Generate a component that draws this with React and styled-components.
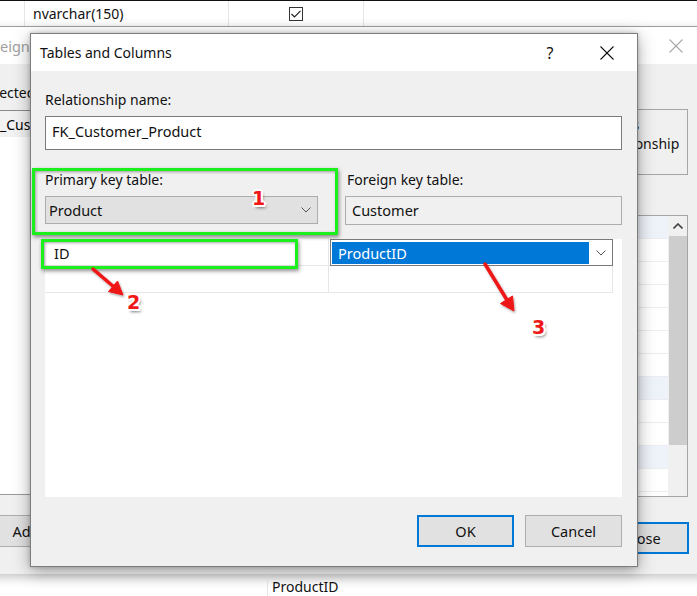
import React from 'react';
import styled, { createGlobalStyle } from 'styled-components';

const Global = createGlobalStyle`
  html, body { margin: 0; padding: 0; background: #fff; }
  body { font-family: "Noto Sans", "Open Sans", sans-serif; font-size: 14px; color: #000; }
  * { box-sizing: border-box; }
`;

const Screen = styled.div`
  position: relative;
  width: 697px;
  height: 596px;
  overflow: hidden;
  background: #fff;
`;

/* ---------- background table (top) ---------- */
const BackTable = styled.div`
  position: absolute;
  left: 0;
  top: 0;
  width: 100%;
  height: 27px;
  border-top: 1px solid #111;
  border-bottom: 1px solid #a8a8a8;
  display: grid;
  grid-template-columns: 24px 204px 135px 1fr;
  background: #fff;
`;

const TableCell = styled.div`
  display: flex;
  align-items: center;
  justify-content: ${p => (p.$center ? 'center' : 'flex-start')};
  padding-left: ${p => (p.$center ? 0 : p.$pad ?? 8)}px;
  border-left: ${p => (p.$first ? 'none' : '1px solid #e6e6e6')};
  font-size: 14px;
  color: #111;
  white-space: nowrap;
`;

const CheckBox = styled.div`
  width: 14px;
  height: 14px;
  border: 1px solid #333;
  display: flex;
  align-items: center;
  justify-content: center;
  background: #fff;
`;

const BottomRow = styled.div`
  position: absolute;
  left: 0;
  top: 575px;
  width: 100%;
  height: 22px;
  display: grid;
  grid-template-columns: 267px 1fr;
`;

/* ---------- background dialog ---------- */
const BackDialog = styled.div`
  position: absolute;
  left: -32px;
  top: 27px;
  width: 740px;
  height: 547px;
  background: #f0f0f0;
  box-shadow: 0 3px 10px rgba(0, 0, 0, 0.25);
  display: flex;
  flex-direction: column;
`;

const BackTitleBar = styled.div`
  height: 37px;
  flex: none;
  background: #fff;
  display: flex;
  align-items: center;
  padding: 0 25px 0 10px;
  color: #a0a0a0;
  font-size: 14.5px;
`;

const CaptionIcon = styled.div`
  margin-left: auto;
  width: 14px;
  height: 14px;
  display: flex;
`;

const BackBody = styled.div`
  flex: 1;
  display: grid;
  grid-template-columns: 270px 1fr;
  column-gap: 30px;
  padding: 19px 50px 0 12px;
`;

const BackColumn = styled.div`
  display: flex;
  flex-direction: column;
`;

const BackLabel = styled.div`
  height: 19px;
  line-height: 19px;
  font-size: 14px;
  color: #111;
  white-space: nowrap;
  margin-left: ${p => p.$indent || 0}px;
`;

const List = styled.div`
  margin-top: 8px;
  height: 385px;
  background: #fff;
  border: 1px solid #8a8a8a;
  border-bottom-color: #9a9a9a;
`;

const ListItem = styled.div`
  height: 26px;
  line-height: 28px;
  padding-left: 3px;
  background: #f2f2f2;
  font-size: 14px;
  white-space: nowrap;
`;

const WinButton = styled.div`
  width: ${p => p.$w || 97}px;
  height: 32px;
  flex: none;
  background: #e1e1e1;
  border: ${p => (p.$default ? '2px solid #0078d7' : '1px solid #adadad')};
  display: flex;
  align-items: center;
  justify-content: center;
  font-size: 14.5px;
  color: #111;
`;

const AddRow = styled.div`
  margin-top: 20px;
  display: flex;
  margin-left: -14px;
`;

const DescBox = styled.div`
  margin-top: 7px;
  height: 66px;
  border: 1px solid #a6a6a6;
  display: flex;
  flex-direction: column;
  align-items: flex-end;
  padding: 5px 8px 0 0;
  font-size: 14px;
  line-height: 19px;
  color: #111;
`;

const DescLine = styled.div`
  white-space: nowrap;
  padding-right: ${p => p.$trail || 0}px;
`;

const PropGrid = styled.div`
  margin-top: 40px;
  height: 282px;
  border: 1px solid #a6a6a6;
  background: #fff;
  display: grid;
  grid-template-columns: 1fr 19px;
  overflow: hidden;
`;

const PropRows = styled.div`
  display: flex;
  flex-direction: column;
`;

const PropRow = styled.div`
  height: 23px;
  flex: none;
  border-bottom: 1px solid #ececf2;
  background: ${p => (p.$alt ? '#eef2f9' : '#fff')};
`;

const ScrollBar = styled.div`
  background: #f0f0f0;
  display: grid;
  grid-template-rows: 20px 209px 1fr 20px;
`;

const ScrollArrow = styled.div`
  display: flex;
  align-items: center;
  justify-content: center;
`;

const ScrollThumb = styled.div`
  background: #cdcdcd;
  margin: 0 0 0 1px;
`;

const CloseRow = styled.div`
  margin-top: 25px;
  display: flex;
  justify-content: flex-end;
  margin-right: -1px;
`;

/* ---------- front dialog ---------- */
const Dialog = styled.div`
  position: absolute;
  left: 30px;
  top: 33px;
  width: 608px;
  height: 534px;
  border: 1px solid #7d7d7d;
  background: #f0f0f0;
  box-shadow: 0 4px 16px rgba(0, 0, 0, 0.35), 0 0 4px rgba(0, 0, 0, 0.2);
  display: flex;
  flex-direction: column;
`;

const TitleBar = styled.div`
  height: 37px;
  flex: none;
  background: #fff;
  display: flex;
  align-items: center;
  padding: 0 7px 0 9px;
  font-size: 14px;
  color: #111;
`;

const TitleText = styled.div`
  flex: 1;
  white-space: nowrap;
`;

const CaptionButton = styled.div`
  width: 46px;
  height: 37px;
  display: flex;
  align-items: center;
  justify-content: center;
  margin-left: ${p => p.$gap || 0}px;
  font-size: 16px;
  color: #111;
`;

const Body = styled.div`
  flex: 1;
  display: flex;
  flex-direction: column;
  padding: 0 14px 0 14px;
`;

const FieldLabel = styled.div`
  height: 18px;
  line-height: 18px;
  margin-top: ${p => p.$mt || 0}px;
  padding-left: ${p => p.$indent || 0}px;
  font-size: 14px;
  color: #111;
  white-space: nowrap;
`;

const TextBox = styled.div`
  margin-top: 7px;
  height: 34px;
  background: #fff;
  border: 1px solid #7a7a7a;
  display: flex;
  align-items: center;
  padding: 0 0 5px 6px;
  font-size: 14.5px;
  color: #111;
  margin-right: 1px;
`;

const KeyTables = styled.div`
  display: grid;
  grid-template-columns: 273px 277px;
  column-gap: 27px;
  margin-top: 3px;
`;

const KeyColumn = styled.div`
  display: flex;
  flex-direction: column;
`;

const ComboBox = styled.div`
  margin-top: 7px;
  height: ${p => (p.$readonly ? 29 : 28)}px;
  background: ${p => (p.$readonly ? '#f0f0f0' : '#e1e1e1')};
  border: 1px solid #adadad;
  display: flex;
  align-items: center;
  padding: 0 6px 1px ${p => (p.$readonly ? 6 : 3)}px;
  font-size: 14.5px;
  color: #111;
`;

const ComboText = styled.div`
  flex: 1;
`;

const ColumnGrid = styled.div`
  margin-top: 14px;
  height: 258px;
  background: #fff;
  margin-right: 1px;
`;

const GridRow = styled.div`
  display: grid;
  grid-template-columns: 284px 284px;
  height: 27px;
  border-bottom: 1px solid #e6e6e6;
  width: 568px;
`;

const GridCell = styled.div`
  display: flex;
  align-items: center;
  padding-left: 9px;
  border-right: 1px solid #e6e6e6;
  font-size: 14.5px;
  color: #111;
`;

const CellCombo = styled.div`
  margin: 0 0 0 1px;
  height: 27px;
  border: 1px solid #7a7a7a;
  background: #fff;
  display: flex;
  align-items: stretch;
  padding: 2px 0 1px 1px;
`;

const Selected = styled.div`
  width: 257px;
  background: #0078d7;
  color: #fff;
  display: flex;
  align-items: center;
  padding-left: 6px;
  font-size: 14.5px;
`;

const CellChevron = styled.div`
  flex: 1;
  display: flex;
  align-items: center;
  justify-content: center;
`;

const Footer = styled.div`
  margin-top: 18px;
  display: flex;
  justify-content: flex-end;
  gap: 11px;
  margin-right: 1px;
`;

/* ---------- annotations (over content) ---------- */
const GreenBox = styled.div`
  position: absolute;
  left: ${p => p.$x}px;
  top: ${p => p.$y}px;
  width: ${p => p.$w}px;
  height: ${p => p.$h}px;
  border: 3px solid #1cf01c;
  box-shadow: 1px 2px 4px rgba(0, 0, 0, 0.45), inset 1px 1px 3px rgba(0, 0, 0, 0.35);
  pointer-events: none;
`;

const Badge = styled.div`
  position: absolute;
  left: ${p => p.$x}px;
  top: ${p => p.$y}px;
  font-family: "DejaVu Sans", "Liberation Sans", sans-serif;
  font-weight: bold;
  font-size: 19px;
  line-height: 20px;
  color: #f01818;
  text-shadow:
    -2px 0 0 #fff, 2px 0 0 #fff, 0 -2px 0 #fff, 0 2px 0 #fff,
    -1.5px -1.5px 0 #fff, 1.5px -1.5px 0 #fff, -1.5px 1.5px 0 #fff, 1.5px 1.5px 0 #fff,
    2px 3px 3px rgba(0, 0, 0, 0.5);
`;

const Overlay = styled.svg`
  position: absolute;
  left: 0;
  top: 0;
  width: 697px;
  height: 596px;
  pointer-events: none;
`;

const Chevron = ({ color = '#333' }) => (
  <svg width="10" height="6" viewBox="0 0 10 6">
    <polyline points="0.5,0.5 5,5 9.5,0.5" fill="none" stroke={color} strokeWidth="1" />
  </svg>
);

const XIcon = ({ color = '#111', size = 14 }) => (
  <svg width={size} height={size} viewBox="0 0 14 14">
    <line x1="0.5" y1="0.5" x2="13.5" y2="13.5" stroke={color} strokeWidth="1.1" />
    <line x1="13.5" y1="0.5" x2="0.5" y2="13.5" stroke={color} strokeWidth="1.1" />
  </svg>
);

const propRows = Array.from({ length: 13 }, (_, i) => i === 0 || i === 7 || i === 10);

export default function App() {
  return (
    <Screen>
      <Global />

      <BackTable>
        <TableCell $first />
        <TableCell>nvarchar(150)</TableCell>
        <TableCell $center>
          <CheckBox>
            <svg width="10" height="8" viewBox="0 0 10 8">
              <polyline points="0.5,4 3.5,7 9.5,0.8" fill="none" stroke="#222" strokeWidth="1.2" />
            </svg>
          </CheckBox>
        </TableCell>
        <TableCell />
      </BackTable>

      <BackDialog>
        <BackTitleBar>
          Foreign Key Relationships
          <CaptionIcon>
            <XIcon color="#a8a8a8" />
          </CaptionIcon>
        </BackTitleBar>
        <BackBody>
          <BackColumn>
            <BackLabel>Selected Relationship:</BackLabel>
            <List>
              <ListItem>FK_Customer_Product*</ListItem>
            </List>
            <AddRow>
              <WinButton $w={120}>Add</WinButton>
            </AddRow>
          </BackColumn>
          <BackColumn>
            <BackLabel $indent={10}>Editing properties for new relationship.</BackLabel>
            <DescBox>
              <DescLine $trail={40}>The 'Tables And Columns Specification' property needs</DescLine>
              <DescLine>to be filled in before the new relationship</DescLine>
            </DescBox>
            <PropGrid>
              <PropRows>
                {propRows.map((alt, i) => (
                  <PropRow key={i} $alt={alt} />
                ))}
              </PropRows>
              <ScrollBar>
                <ScrollArrow>
                  <svg width="10" height="6" viewBox="0 0 10 6">
                    <polyline points="0.5,5.5 5,1 9.5,5.5" fill="none" stroke="#444" strokeWidth="1.6" />
                  </svg>
                </ScrollArrow>
                <ScrollThumb />
                <div />
                <ScrollArrow>
                  <svg width="10" height="6" viewBox="0 0 10 6">
                    <polyline points="0.5,0.5 5,5 9.5,0.5" fill="none" stroke="#444" strokeWidth="1.6" />
                  </svg>
                </ScrollArrow>
              </ScrollBar>
            </PropGrid>
            <CloseRow>
              <WinButton $w={94} $default>Close</WinButton>
            </CloseRow>
          </BackColumn>
        </BackBody>
      </BackDialog>

      <BottomRow>
        <TableCell $first />
        <TableCell $pad={4}>ProductID</TableCell>
      </BottomRow>

      <Dialog>
        <TitleBar>
          <TitleText>Tables and Columns</TitleText>
          <CaptionButton>?</CaptionButton>
          <CaptionButton $gap={11}>
            <XIcon />
          </CaptionButton>
        </TitleBar>
        <Body>
          <FieldLabel $mt={20}>Relationship name:</FieldLabel>
          <TextBox>FK_Customer_Product</TextBox>
          <KeyTables>
            <KeyColumn>
              <FieldLabel $mt={18}>Primary key table:</FieldLabel>
              <ComboBox>
                <ComboText>Product</ComboText>
                <Chevron color="#555" />
              </ComboBox>
            </KeyColumn>
            <KeyColumn>
              <FieldLabel $mt={18} $indent={2}>Foreign key table:</FieldLabel>
              <ComboBox $readonly>Customer</ComboBox>
            </KeyColumn>
          </KeyTables>
          <ColumnGrid>
            <GridRow>
              <GridCell>ID</GridCell>
              <CellCombo>
                <Selected>ProductID</Selected>
                <CellChevron>
                  <Chevron color="#555" />
                </CellChevron>
              </CellCombo>
            </GridRow>
            <GridRow>
              <GridCell />
              <GridCell />
            </GridRow>
          </ColumnGrid>
          <Footer>
            <WinButton $default>OK</WinButton>
            <WinButton>Cancel</WinButton>
          </Footer>
        </Body>
      </Dialog>

      <GreenBox $x={32} $y={168} $w={306} $h={67} />
      <GreenBox $x={41} $y={239} $w={257} $h={30} />

      <Overlay viewBox="0 0 697 596">
        <defs>
          <filter id="sh" x="-20%" y="-20%" width="140%" height="140%">
            <feDropShadow dx="1" dy="1.5" stdDeviation="1" floodColor="#000" floodOpacity="0.35" />
          </filter>
        </defs>
        <g filter="url(#sh)" fill="#ee1515" stroke="#ee1515">
          <line x1="93" y1="269" x2="114" y2="287" strokeWidth="3.5" strokeLinecap="round" />
          <polygon points="123,295 108.5,291.5 117.5,281" strokeWidth="1" strokeLinejoin="round" />
          <line x1="485" y1="264" x2="507" y2="300" strokeWidth="3.5" strokeLinecap="round" />
          <polygon points="514,311 500.5,303.5 512.5,296" strokeWidth="1" strokeLinejoin="round" />
        </g>
      </Overlay>

      <Badge $x={252} $y={188}>1</Badge>
      <Badge $x={127} $y={292}>2</Badge>
      <Badge $x={532} $y={317}>3</Badge>
    </Screen>
  );
}
